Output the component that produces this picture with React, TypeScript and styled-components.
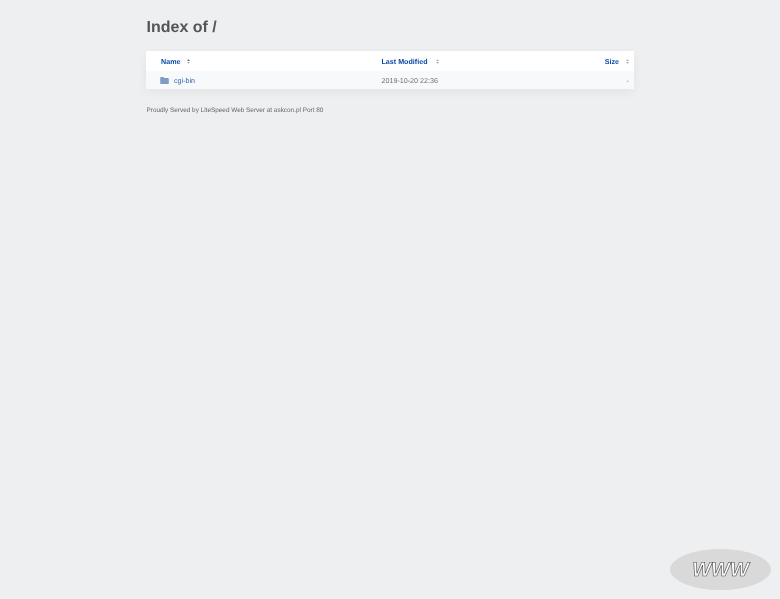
import styled, { createGlobalStyle } from "styled-components";

const GlobalStyle = createGlobalStyle`
    html, body {
        margin: 0;
        height: 100%;
        background: #edeff0;
        font-family: "Liberation Sans", Arial, sans-serif;
        text-rendering: geometricPrecision;
    }
`;

const SortIcon = ({ active = false }: { active?: boolean }) => (
    <SortSvg viewBox="0 0 6 9" width="3" height="5">
        <path d="M3 0 L6 3.5 H0 Z" fill={active ? "#666" : "#a6abb0"} />
        <path d="M3 9 L0 5.5 H6 Z" fill="#a6abb0" />
    </SortSvg>
);

const App = () => {
    return (
        <>
            <GlobalStyle />
            <Page>
                <Title>Index of /</Title>
                <Listing>
                    <HeadRow>
                        <NameHead>
                            <HeadLink>Name</HeadLink>
                            <SortIcon active />
                        </NameHead>
                        <DateHead>
                            <HeadLink>Last Modified</HeadLink>
                            <SortIcon />
                        </DateHead>
                        <SizeHead>
                            <HeadLink>Size</HeadLink>
                            <SortIcon />
                        </SizeHead>
                    </HeadRow>
                    <FileRow>
                        <NameCell>
                            <FolderSvg viewBox="0 0 16 13" width="9" height="7">
                                <path d="M1.5 0 H6 L8 2 H14.5 A1.5 1.5 0 0 1 16 3.5 V11.5 A1.5 1.5 0 0 1 14.5 13 H1.5 A1.5 1.5 0 0 1 0 11.5 V1.5 A1.5 1.5 0 0 1 1.5 0 Z" fill="#7f9cc4" />
                            </FolderSvg>
                            <FileLink>cgi-bin</FileLink>
                        </NameCell>
                        <DateValue>2019-10-20 22:36</DateValue>
                        <SizeValue>-</SizeValue>
                    </FileRow>
                </Listing>
                <Footer>Proudly Served by LiteSpeed Web Server at askcon.pl Port 80</Footer>
            </Page>
            <Badge>
                <BadgeText>WWW</BadgeText>
            </Badge>
        </>
    );
};

const Page = styled.main`
    width: 488px;
    margin: 0 auto;
    padding-top: 17px;
    will-change: transform;
`;

const Title = styled.h1`
    box-sizing: border-box;
    height: 20px;
    margin: 0 0 14px;
    padding: 1px 0 0 0.5px;
    color: #555;
    font-size: 16px;
    line-height: 20px;
    font-weight: 700;
`;

const Listing = styled.div`
    background: #fff;
    box-shadow: 0 3px 10px rgba(0, 0, 0, 0.05);
`;

const Row = styled.div`
    box-sizing: border-box;
    display: grid;
    grid-template-columns: 235px 1fr 80px;
    align-items: center;
    padding-top: 1px;
`;

const HeadRow = styled(Row)`
    height: 20px;
`;

const FileRow = styled(Row)`
    height: 18px;
    padding-top: 2px;
    background: #f8f9fa;
`;

const NameCell = styled.div`
    display: flex;
    align-items: center;
    gap: 5px;
    padding-left: 14px;
`;

const NameHead = styled(NameCell)`
    gap: 7px;
    padding-left: 15px;
`;

const DateHead = styled.div`
    display: flex;
    align-items: center;
    gap: 8px;
    padding-left: 0.5px;
`;

const DateValue = styled.div`
    padding-left: 0.5px;
    color: #6d7176;
    font-size: 7.15px;
`;

const SizeHead = styled.div`
    display: flex;
    align-items: center;
    justify-content: flex-end;
    gap: 7px;
    padding-right: 5px;
`;

const SizeValue = styled.div`
    padding-right: 5px;
    color: #777;
    font-size: 7.15px;
    text-align: right;
`;

const HeadLink = styled.a`
    color: #0b49a8;
    font-size: 7.15px;
    font-weight: 700;
`;

const FileLink = styled.a`
    color: #2a62b8;
    font-size: 7.15px;
`;

const SortSvg = styled.svg`
    display: block;
`;

const FolderSvg = styled.svg`
    display: block;
    margin-top: -1px;
`;

const Footer = styled.p`
    margin: 16px 0 0;
    padding: 1.5px 0 0 0.5px;
    color: #686868;
    font-size: 6.42px;
    line-height: 8px;
`;

const Badge = styled.div`
    box-sizing: border-box;
    position: fixed;
    left: 670px;
    top: 549px;
    width: 101px;
    height: 41px;
    padding-top: 1px;
    border-radius: 50%;
    background: #d9d9d9;
    display: flex;
    align-items: center;
    justify-content: center;
    will-change: transform;
`;

const BadgeText = styled.span`
    color: #fbfbfb;
    font-family: "Liberation Sans", Arial, sans-serif;
    font-size: 20px;
    font-style: italic;
    font-weight: 700;
    -webkit-text-stroke: 0.6px #4c4c4c;
`;

export default App;
